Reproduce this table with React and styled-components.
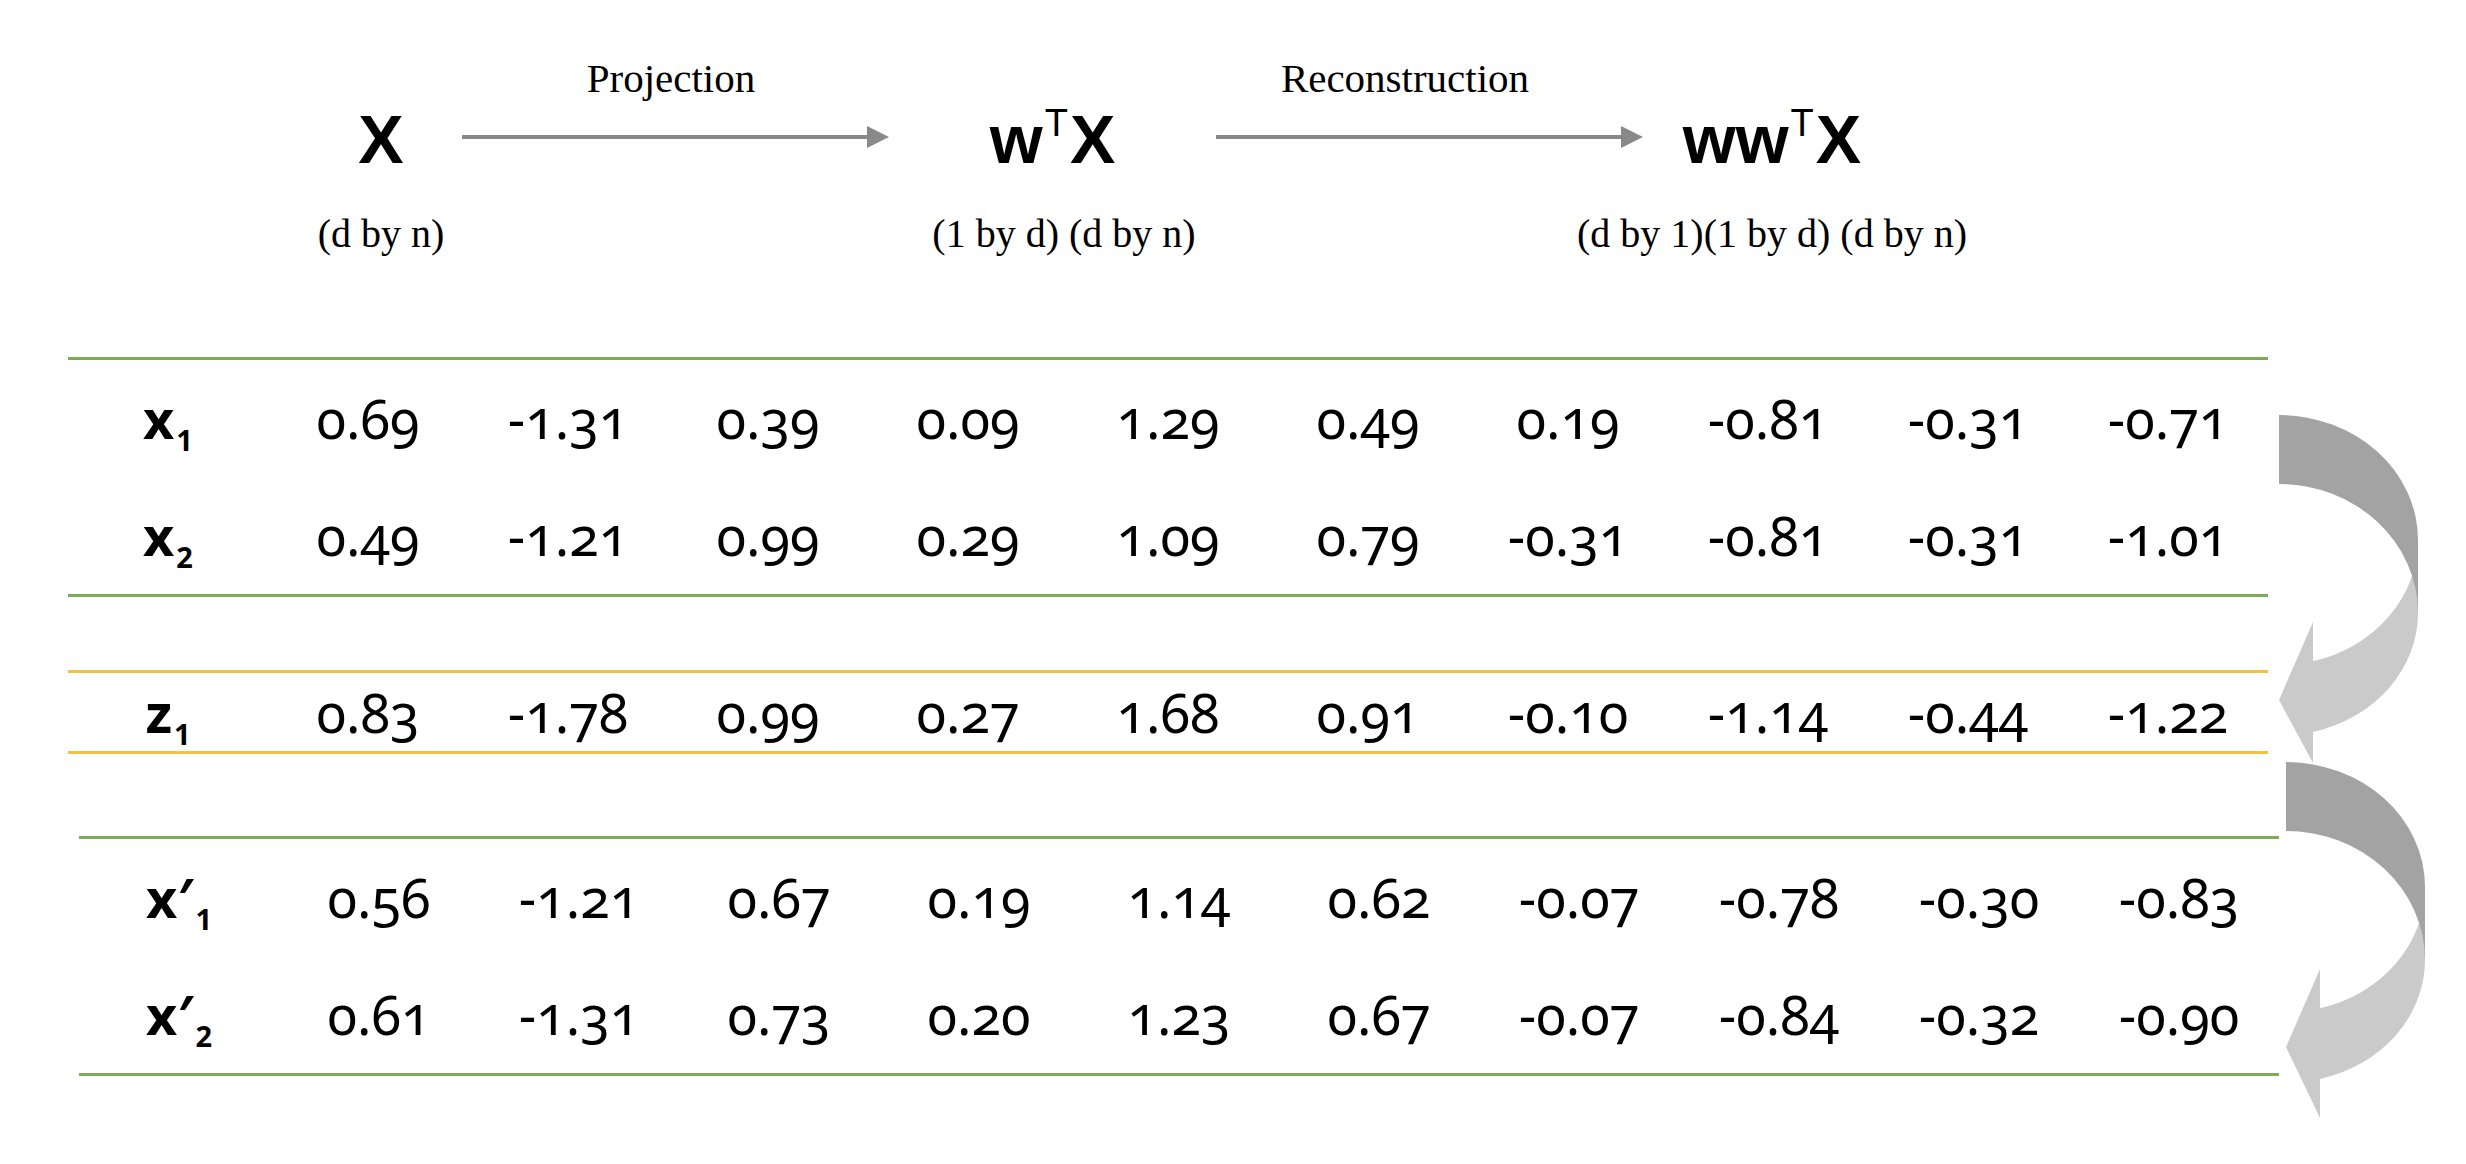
import React from 'react';
import styled, { createGlobalStyle } from 'styled-components';

const GlobalStyle = createGlobalStyle`
  html, body {
    margin: 0;
    padding: 0;
    background: #ffffff;
  }
  body {
    color: #000000;
    overflow: hidden;
  }
`;

const Page = styled.div`
  width: 2466px;
  height: 1164px;
  overflow: hidden;
  background: #ffffff;
  display: flex;
  flex-direction: column;
`;

/* ---------- header: X -> w^T X -> w w^T X ---------- */

const Header = styled.header`
  height: 357px;
  box-sizing: border-box;
  padding: 58px 0 0 300px;
  display: flex;
  align-items: flex-start;
  flex-shrink: 0;
`;

const Node = styled.div`
  width: ${p => p.$w}px;
  padding-top: 47px;
  display: flex;
  flex-direction: column;
  align-items: center;
`;

const Symbol = styled.div`
  font-family: "Liberation Sans", Arial, sans-serif;
  font-weight: 700;
  font-size: 68px;
  line-height: 68px;
  white-space: nowrap;
`;

const Sup = styled.span`
  font-weight: 400;
  font-size: 38px;
  line-height: 0;
  vertical-align: 27px;
  margin: 0 2px;
`;

const Dim = styled.div`
  margin-top: 41px;
  padding-left: ${p => p.$dx || 0}px;
  font-family: "Liberation Serif", "Times New Roman", serif;
  font-size: 40px;
  line-height: 40px;
  white-space: nowrap;
`;

const Flow = styled.div`
  width: 427px;
  display: flex;
  flex-direction: column;
  align-items: center;
`;

const FlowLabel = styled.div`
  padding-right: ${p => p.$pr || 0}px;
  font-family: "Liberation Serif", "Times New Roman", serif;
  font-size: 41px;
  line-height: 41px;
  white-space: nowrap;
`;

const FlowArrow = styled.svg`
  display: block;
  margin-top: 27px;
`;

const Arrow = () => (
  <FlowArrow width="427" height="22" viewBox="0 0 427 22">
    <line x1="0" y1="11" x2="406" y2="11" stroke="#898989" strokeWidth="4" />
    <polygon points="405,0 427,11 405,22" fill="#898989" />
  </FlowArrow>
);

/* ---------- tables ---------- */

const Body = styled.div`
  display: flex;
  align-items: flex-start;
`;

const Tables = styled.div`
  width: 2279px;
  box-sizing: border-box;
  padding-left: 68px;
  flex-shrink: 0;
  display: flex;
  flex-direction: column;
`;

const Block = styled.div`
  width: 2200px;
  margin-left: ${p => p.$shift || 0}px;
  margin-top: ${p => p.$gap || 0}px;
  border-top: 3px solid ${p => p.$color};
  border-bottom: 3px solid ${p => p.$color};
`;

const Row = styled.div`
  display: grid;
  grid-template-columns: repeat(11, 200px);
  height: ${p => p.$h}px;
  line-height: ${p => p.$h}px;
  font-family: "Noto Sans", "Open Sans", sans-serif;
  font-size: 54px;
  font-variant-numeric: oldstyle-nums;
`;

const Cell = styled.div`
  text-align: center;
  white-space: nowrap;
`;

const Label = styled(Cell)`
  font-weight: 700;
`;

const Sub = styled.span`
  font-size: 29px;
  line-height: 0;
  vertical-align: -12px;
  font-variant-numeric: lining-nums;
  margin-left: 2px;
`;

const Side = styled.svg`
  display: block;
  flex-shrink: 0;
  overflow: visible;
`;

const GREEN = '#7eac56';
const YELLOW = '#f5c242';

const TableRow = ({ name, prime, idx, values, h }) => (
  <Row $h={h}>
    <Label>
      {name}
      {prime ? '\u2032' : ''}
      <Sub>{idx}</Sub>
    </Label>
    {values.map((v, i) => (
      <Cell key={i}>{v}</Cell>
    ))}
  </Row>
);

const CurvedArrow = ({ dx, dy, hb }) => (
  <g transform={`translate(${dx} ${dy})`}>
    <path
      d={`M139,183 A139,125 0 0 1 34,304.2 L34,265 L0,343 L34,${hb} L34,375 A139,122.7 0 0 0 139,256 Z`}
      fill="#cacaca"
    />
    <path d="M0,58 A139,125 0 0 1 139,183 L139,256 A139,129 0 0 0 0,127 Z" fill="#a3a3a3" />
  </g>
);

const x1 = ['0.69', '-1.31', '0.39', '0.09', '1.29', '0.49', '0.19', '-0.81', '-0.31', '-0.71'];
const x2 = ['0.49', '-1.21', '0.99', '0.29', '1.09', '0.79', '-0.31', '-0.81', '-0.31', '-1.01'];
const z1 = ['0.83', '-1.78', '0.99', '0.27', '1.68', '0.91', '-0.10', '-1.14', '-0.44', '-1.22'];
const r1 = ['0.56', '-1.21', '0.67', '0.19', '1.14', '0.62', '-0.07', '-0.78', '-0.30', '-0.83'];
const r2 = ['0.61', '-1.31', '0.73', '0.20', '1.23', '0.67', '-0.07', '-0.84', '-0.32', '-0.90'];

const App = () => (
  <>
    <GlobalStyle />
    <Page>
      <Header>
        <Node $w={162}>
          <Symbol>X</Symbol>
          <Dim>(d by n)</Dim>
        </Node>
        <Flow>
          <FlowLabel $pr={9}>Projection</FlowLabel>
          <Arrow />
        </Flow>
        <Node $w={327}>
          <Symbol>
            w<Sup>T</Sup>X
          </Symbol>
          <Dim $dx={23}>(1 by d) (d by n)</Dim>
        </Node>
        <Flow>
          <FlowLabel $pr={49}>Reconstruction</FlowLabel>
          <Arrow />
        </Flow>
        <Node $w={258}>
          <Symbol>
            ww<Sup>T</Sup>X
          </Symbol>
          <Dim>(d by 1)(1 by d) (d by n)</Dim>
        </Node>
      </Header>

      <Body>
        <Tables>
          <Block $color={GREEN}>
            <TableRow name="x" idx="1" values={x1} h={117} />
            <TableRow name="x" idx="2" values={x2} h={117} />
          </Block>
          <Block $color={YELLOW} $gap={73}>
            <TableRow name="z" idx="1" values={z1} h={78} />
          </Block>
          <Block $color={GREEN} $gap={82} $shift={11}>
            <TableRow name="x" prime idx="1" values={r1} h={117} />
            <TableRow name="x" prime idx="2" values={r2} h={117} />
          </Block>
        </Tables>
        <Side width="150" height="770" viewBox="0 0 150 770">
          <CurvedArrow dx={0} dy={0} hb={406} />
          <CurvedArrow dx={7} dy={347} hb={414} />
        </Side>
      </Body>
    </Page>
  </>
);

export default App;
